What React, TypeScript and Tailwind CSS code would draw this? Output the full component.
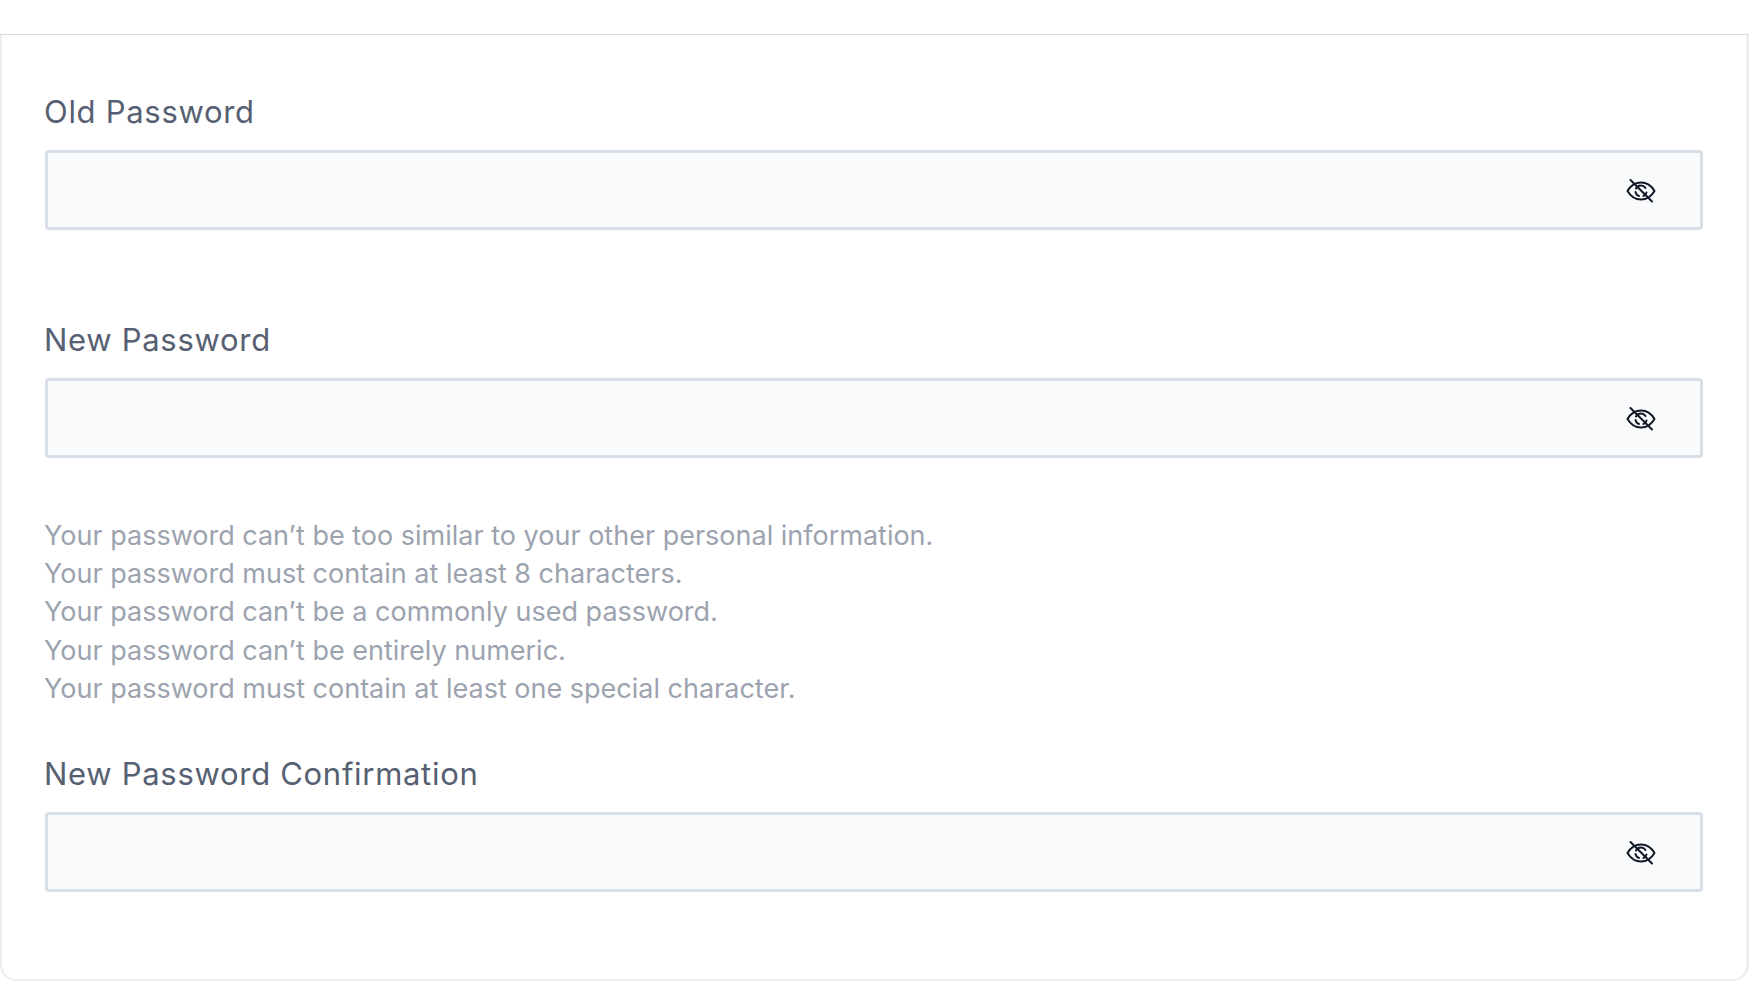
const helpLines = [
  "Your password can’t be too similar to your other personal information.",
  "Your password must contain at least 8 characters.",
  "Your password can’t be a commonly used password.",
  "Your password can’t be entirely numeric.",
  "Your password must contain at least one special character.",
];

const EyeOff = () => (
  <svg className="mt-[2px]" width="30" height="24" viewBox="0 0 30 24" fill="none" stroke="#111827" strokeWidth="2" strokeLinecap="round" strokeLinejoin="round">
    <path d="M1.500 12 C5 6 9.500 3.500 15 3.500 S25 6 28.500 12 C25 18 20.500 20.500 15 20.500 S5 18 1.500 12Z" />
    <path d="M10 9.500A5.500 5.500 0 0 1 19.500 9" />
    <path d="M9.500 13A5.500 5.500 0 0 0 13 17" />
    <path d="M20.500 13.500A5.500 5.500 0 0 1 17.500 17" />
    <path d="M4.500 1 26 22.500" />
  </svg>
);

const PasswordField = ({ label }: { label: string }) => (
  <div>
    <label className="block -ml-[1px] text-[31px] tracking-[0.7px] leading-[38px] text-[#566072] mb-[19px]">{label}</label>
    <div className="h-[80px] flex items-center justify-end bg-[#f9fafb] border-[3px] border-[#d8dee6] rounded-[4px] pr-[44px]">
      <EyeOff />
    </div>
  </div>
);

export default function App() {
  return (
    <div className="w-[1749px] h-[981px] overflow-hidden bg-white font-['Inter',sans-serif]">
      <div className="h-[34px] border-b border-[#d5dde6] box-content" />
      <div className="h-[946px] bg-white border-l-2 border-r-[3px] border-b-2 border-[#eeeeee] rounded-b-[16px] pl-[43px] pr-[43px] pt-[58px]">
        <PasswordField label="Old Password" />
        <div className="mt-[91px]">
          <PasswordField label="New Password" />
        </div>
        <div className="mt-[59px] -ml-[1px] text-[27px] leading-[38.2px] text-[#9ca3af]">
          {helpLines.map((line) => (
            <p key={line}>{line}</p>
          ))}
        </div>
        <div className="mt-[47px]">
          <PasswordField label="New Password Confirmation" />
        </div>
      </div>
    </div>
  );
}
